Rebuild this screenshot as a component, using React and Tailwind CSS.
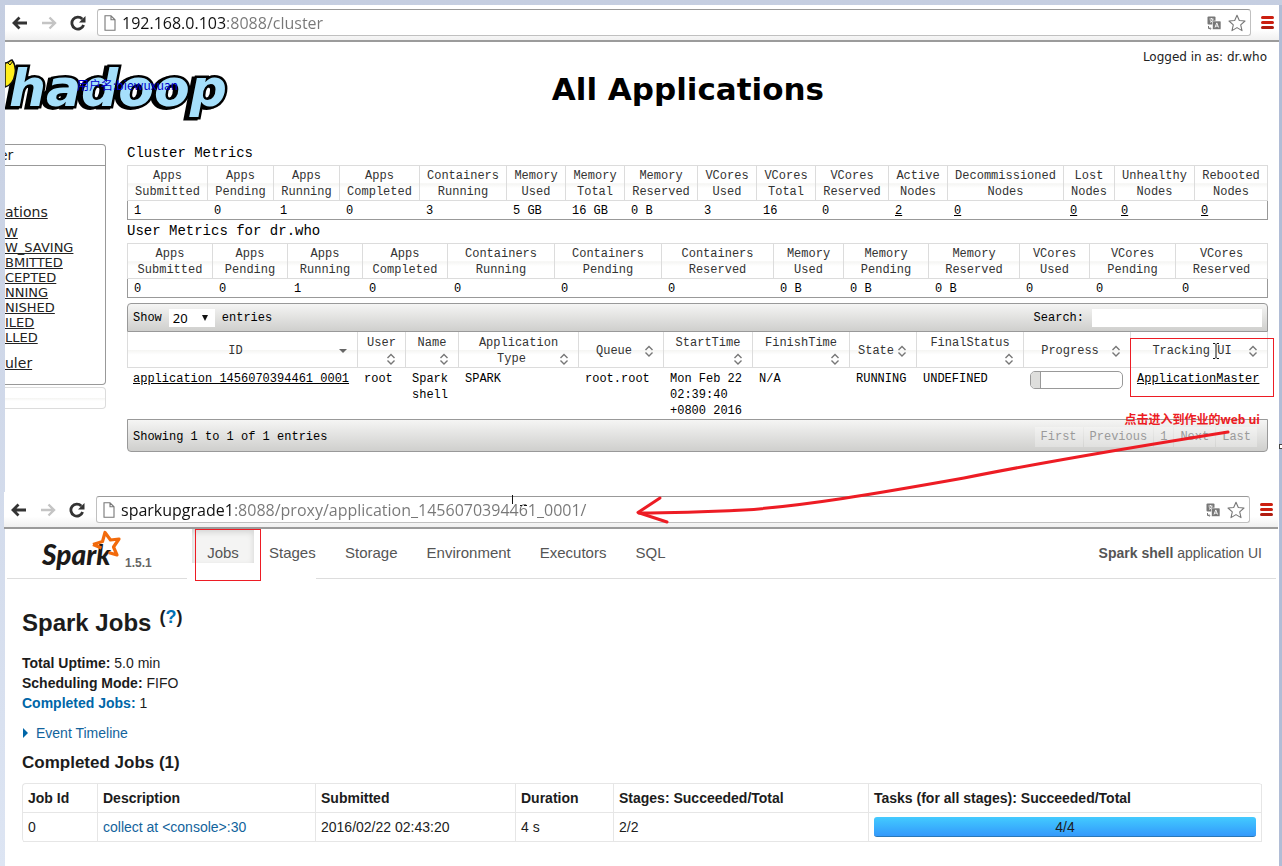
import React from "react";

function BackIcon({ className }) {
  return (
    <svg viewBox="0 0 16 14" className={className} fill="none" stroke="currentColor" aria-hidden="true">
      <path d="M15 7H2.5M7.5 1.5L2 7l5.500 5.500" strokeWidth="2.800" />
    </svg>
  );
}

function ForwardIcon({ className }) {
  return (
    <svg viewBox="0 0 16 14" className={className} fill="none" stroke="currentColor" aria-hidden="true">
      <path d="M1 7h12.500M8.500 1.500L14 7l-5.500 5.500" strokeWidth="2.400" />
    </svg>
  );
}

function ReloadIcon({ className }) {
  return (
    <svg viewBox="0 0 16 16" className={className} aria-hidden="true">
      <path d="M12.300 4A6 6 0 1 0 13.600 10" fill="none" stroke="currentColor" strokeWidth="2.800" />
      <path d="M15.500 1v6.500H9z" fill="currentColor" />
    </svg>
  );
}

function PageIcon() {
  return (
    <svg viewBox="0 0 12 16" className="h-4 w-3 shrink-0" fill="none" stroke="#777" aria-hidden="true">
      <path d="M1 .8h6l4 4v10.500H1zM7 .8v4h4" strokeWidth="1.100" />
    </svg>
  );
}

function TranslateIcon() {
  return (
    <svg viewBox="0 0 14 14" className="h-3.5 w-3.5" aria-hidden="true">
      <rect x="0.500" y="0.500" width="8" height="8" rx="1" fill="#777" />
      <path d="M2.500 3h4M4.500 2v1M3 6.300c1.500-.6 2.500-1.600 2.900-3.200M3.200 4.300c.6 1 1.500 1.700 2.600 2" stroke="#fff" strokeWidth=".9" fill="none" />
      <rect x="5.500" y="5" width="8.500" height="8.500" rx="1" fill="#777" stroke="#fff" strokeWidth=".6" />
      <path d="M8 11.500l1.800-4.600 1.800 4.600M8.600 10.100h2.400" stroke="#fff" strokeWidth=".9" fill="none" />
      <path d="M1.500 10v2.500h2M2.800 11.300l1.200 1.200-1.200 1.200" stroke="#777" fill="none" />
    </svg>
  );
}

function StarIcon() {
  return (
    <svg viewBox="0 0 18 18" className="h-[18px] w-[18px]" aria-hidden="true">
      <path
        d="M9 1.200l2.300 5.300 5.700.5-4.300 3.800 1.300 5.800L9 13.600l-5 3 1.300-5.800L1 7l5.700-.5z"
        fill="#fff"
        stroke="#777"
        strokeWidth="1.100"
        strokeLinejoin="round"
      />
    </svg>
  );
}

function BrowserBar({ url, tone }) {
  return (
    <div className="flex items-center border-b-2 border-[#9b9b9b] bg-linear-to-b from-white from-70% to-[#f0f0f0] py-1 pr-[5px]">
      <div className="flex w-[92px] items-center gap-[13px] pl-[7px]">
        <button type="button" aria-label="Back" className="text-[#333]">
          <BackIcon className="h-3.5 w-4" />
        </button>
        <button type="button" aria-label="Forward" className="text-[#c4c4c4]">
          <ForwardIcon className="h-3.5 w-4" />
        </button>
        <button type="button" aria-label="Reload" className="text-[#333]">
          <ReloadIcon className="h-4 w-4" />
        </button>
      </div>
      <div className="flex h-[27px] flex-1 items-center rounded-[3px] border border-[#c0c0c0] border-t-[#999] bg-white px-1.5">
        <PageIcon />
        <input
          type="text"
          aria-label="Address"
          defaultValue={url}
          className={
            "ml-1.5 h-6 min-w-0 flex-1 bg-clip-text font-['Open_Sans','Noto_Sans',sans-serif] text-base text-transparent caret-black outline-none " +
            tone
          }
        />
        <button type="button" aria-label="Translate this page">
          <TranslateIcon />
        </button>
        <button type="button" aria-label="Bookmark this page" className="-mr-0.5 ml-[7px]">
          <StarIcon />
        </button>
      </div>
      <button type="button" aria-label="Menu" className="ml-2.5 flex w-[13px] flex-col gap-0.5">
        <span className="h-[3px] rounded-full bg-[#cc1f10]" />
        <span className="h-[3px] rounded-full bg-[#cc1f10]" />
        <span className="h-[3px] rounded-full bg-[#b01c10]" />
      </button>
    </div>
  );
}

function HadoopLogo() {
  return (
    <svg viewBox="0 0 228 100" className="h-[100px] w-[228px] shrink-0" role="img" aria-label="hadoop">
      <text
        x="4"
        y="64"
        fontFamily="'DejaVu Sans', sans-serif"
        fontWeight="bold"
        fontStyle="italic"
        fontSize="52"
        fill="#a5dffb"
        stroke="#000"
        strokeWidth="5"
        strokeLinejoin="miter"
        paintOrder="stroke"
        className="drop-shadow-[-3px_1px_0_#000]"
      >
        hadoop
      </text>
      <path d="M0 21c3 0 4-2 7-3 3 4 4 9 3 14-1 6-3 11-10 13z" fill="#ffee1c" stroke="#111" strokeWidth="1.500" />
      <path d="M3 21l2 2 3-4" fill="none" stroke="#111" />
    </svg>
  );
}

const CLUSTER = [
  ["Apps Submitted", "1", "w-[81px]"],
  ["Apps Pending", "0", "w-[66px]"],
  ["Apps Running", "1", "w-[66px]"],
  ["Apps Completed", "0", "w-[80px]"],
  ["Containers Running", "3", "w-[87px]"],
  ["Memory Used", "5 GB", "w-[59px]"],
  ["Memory Total", "16 GB", "w-[59px]"],
  ["Memory Reserved", "0 B", "w-[73px]"],
  ["VCores Used", "3", "w-[59px]"],
  ["VCores Total", "16", "w-[59px]"],
  ["VCores Reserved", "0", "w-[73px]"],
  ["Active Nodes", "2", "w-[59px]", true],
  ["Decommissioned Nodes", "0", "w-[116px]", true],
  ["Lost Nodes", "0", "w-[51px]", true],
  ["Unhealthy Nodes", "0", "w-[80px]", true],
  ["Rebooted Nodes", "0", "w-[73px]", true],
];

const USER = [
  ["Apps Submitted", "0", "w-[86px]"],
  ["Apps Pending", "0", "w-[75px]"],
  ["Apps Running", "1", "w-[75px]"],
  ["Apps Completed", "0", "w-[85px]"],
  ["Containers Running", "0", "w-[107px]"],
  ["Containers Pending", "0", "w-[107px]"],
  ["Containers Reserved", "0", "w-[112px]"],
  ["Memory Used", "0 B", "w-[70px]"],
  ["Memory Pending", "0 B", "w-[85px]"],
  ["Memory Reserved", "0 B", "w-[91px]"],
  ["VCores Used", "0", "w-[70px]"],
  ["VCores Pending", "0", "w-[86px]"],
  ["VCores Reserved", "0", "w-[92px]"],
];

function MetricsTable({ title, data }) {
  return (
    <section>
      <h2 className="h-[23px] text-[14px] leading-[22px] text-black">{title}</h2>
      <table className="w-full table-fixed border-separate border-spacing-0 text-[12px] leading-4">
        <thead>
          <tr>
            {data.map(([head, , width]) => (
              <th
                key={head}
                className={
                  "h-9 border-y border-r border-[#dcdcdc] bg-linear-to-b from-white from-50% via-[#f5f5f3] via-52% to-white to-65% pt-0.5 text-center font-normal text-[#333] first:border-l " +
                  width
                }
              >
                {head.split(" ").map((word) => (
                  <span key={word} className="block">
                    {word}
                  </span>
                ))}
              </th>
            ))}
          </tr>
        </thead>
        <tbody>
          <tr>
            {data.map(([head, value, , link]) => (
              <td
                key={head}
                className="h-[19px] border-b border-[#999] pt-0.5 pl-1.5 text-black first:border-l last:border-r"
              >
                {link ? (
                  <a href="#nodes" className="underline">
                    {value}
                  </a>
                ) : (
                  value
                )}
              </td>
            ))}
          </tr>
        </tbody>
      </table>
    </section>
  );
}

const APP_COLUMNS = [
  ["ID", "w-[231px]"],
  ["User", "w-[48px]"],
  ["Name", "w-[53px]"],
  ["Application Type", "w-[120px]"],
  ["Queue", "w-[85px]"],
  ["StartTime", "w-[89px]"],
  ["FinishTime", "w-[97px]"],
  ["State", "w-[67px]"],
  ["FinalStatus", "w-[107px]"],
  ["Progress", "w-[107px]"],
  ["Tracking UI", "w-[137px]"],
];

function SortIcon({ sorted }) {
  return (
    <svg viewBox="0 0 14 16" className="float-right h-4 w-3.5" aria-hidden="true">
      {sorted ? (
        <path d="M3 6h8l-4 4z" fill="#666" />
      ) : (
        <path d="M3.500 7L7 3.500 10.500 7M3.500 9.500L7 13l3.500-3.500" fill="none" stroke="#777" strokeWidth="1.400" />
      )}
    </svg>
  );
}

function ApplicationsTable() {
  return (
    <div className="relative z-10 mt-[5px] text-[12px] leading-4 text-black">
      <div className="flex h-[29px] items-center justify-between rounded-t border border-[#999] bg-linear-to-b from-[#f5f5f4] to-[#cfcfcd] pr-[5px] pl-[5px]">
        <label className="flex items-center gap-[7px]">
          Show
          <span className="relative flex">
            <select
              defaultValue="20"
              className="h-[18px] w-[46px] appearance-none bg-white pl-1 font-['Noto_Sans',sans-serif] text-[13px] leading-[18px]"
            >
              <option>20</option>
              <option>40</option>
              <option>60</option>
            </select>
            <svg viewBox="0 0 8 6" className="pointer-events-none absolute top-1.5 right-1.5 h-1.5 w-2" aria-hidden="true">
              <path d="M1 0h6L4 6z" fill="#111" />
            </svg>
          </span>
          entries
        </label>
        <label className="flex items-center gap-2">
          Search:
          <input type="text" className="h-[18px] w-[170px] bg-white outline-none" />
        </label>
      </div>
      <table className="w-full table-fixed border-separate border-spacing-0">
        <thead>
          <tr>
            {APP_COLUMNS.map(([name, width], i) => (
              <th
                key={name}
                className={
                  "h-9 border-r border-b border-[#dcdcdc] bg-linear-to-b from-white from-50% via-[#f5f5f3] via-52% to-white to-65% px-[7px] pt-[3px] text-center align-middle font-normal text-[#333] first:border-l " +
                  width
                }
              >
                <div className="flow-root">
                  {name}
                  <SortIcon sorted={i === 0} />
                </div>
              </th>
            ))}
          </tr>
        </thead>
        <tbody>
          <tr className="align-top [&>td]:h-[50px] [&>td]:pt-[3px] [&>td]:pl-1.5">
            <td>
              <a href="#application" className="underline">
                application_1456070394461_0001
              </a>
            </td>
            <td>root</td>
            <td>Spark shell</td>
            <td>SPARK</td>
            <td>root.root</td>
            <td>Mon Feb 22 02:39:40 +0800 2016</td>
            <td>N/A</td>
            <td>RUNNING</td>
            <td>UNDEFINED</td>
            <td>
              <div className="h-[18px] w-[93px] overflow-hidden rounded-[5px] border border-[#999] bg-white">
                <div className="h-full w-2.5 border-r border-[#999] bg-[#dededc]" />
              </div>
            </td>
            <td>
              <a href="#master" className="underline">
                ApplicationMaster
              </a>
            </td>
          </tr>
        </tbody>
      </table>
      <div className="flex h-[33px] items-center justify-between rounded-b border border-[#999] bg-linear-to-b from-[#f5f5f4] to-[#cfcfcd] pt-0.5 pr-2.5 pl-[5px]">
        <span>Showing 1 to 1 of 1 entries</span>
        <div className="flex gap-px text-[#9a9a9a]">
          {["First", "Previous", "1", "Next", "Last"].map((label) => (
            <button key={label} type="button" className="h-5 bg-white/30 px-1.5">
              {label}
            </button>
          ))}
        </div>
      </div>
      <div className="pointer-events-none absolute top-[35px] -right-1.5 h-[59px] w-36 border border-[#ed1c24]" />
      <p className="absolute top-[107px] right-2 font-['Open_Sans','Noto_Sans_CJK_SC',sans-serif] text-[12px] leading-5 font-bold whitespace-nowrap text-[#ed1c24]">
        点击进入到作业的web ui
      </p>
      <svg viewBox="0 0 8 16" className="pointer-events-none absolute top-10 right-12 h-4 w-2" fill="none" stroke="#111" aria-hidden="true">
        <path d="M1 .5h2l1 1 1-1h2M4 1.500v13M1 15.500h2l1-1 1 1h2" />
      </svg>
      <svg
        viewBox="0 0 600 100"
        className="pointer-events-none absolute top-[125px] right-[34px] h-[100px] w-[600px]"
        fill="none"
        stroke="#ed1c24"
        strokeLinecap="round"
        aria-hidden="true"
      >
        <path d="M594 4C500 19 400 36 330 50 240 66 170 78 110 82 70 84 40 85 5 85" strokeWidth="3" />
        <path d="M26 70L4 84.500 33 94" strokeWidth="3" strokeLinejoin="round" />
      </svg>
    </div>
  );
}

const STATES = ["W", "W_SAVING", "BMITTED", "CEPTED", "NNING", "NISHED", "ILED", "LLED"];

function Sidebar() {
  return (
    <aside className="mt-0.5 w-[101px] shrink-0 font-['DejaVu_Sans',sans-serif] text-[#222]">
      <nav className="h-[241px] rounded-r-[4px] border border-l-0 border-[#999]">
        <h3 className="h-[21px] border-b border-[#999] text-[14px] leading-5">
          <span className="-ml-1.5">er</span>
        </h3>
        <a href="#applications" className="mt-9 block text-[14px] leading-5 underline">
          ations
        </a>
        <ul className="mt-[3px] text-[13px] leading-[15px]">
          {STATES.map((state) => (
            <li key={state}>
              <a href="#state" className="underline">
                {state}
              </a>
            </li>
          ))}
        </ul>
        <a href="#scheduler" className="mt-2 block text-[14px] leading-5 underline">
          uler
        </a>
      </nav>
      <div className="mt-0.5 h-[22px] rounded-r-[4px] border border-l-0 border-[#dcdcdc] bg-linear-to-b from-white from-50% via-[#f5f5f3] via-52% to-white to-65%" />
    </aside>
  );
}

function HadoopPage() {
  return (
    <div className="overflow-x-clip pb-10 font-['Liberation_Mono',monospace]">
      <header className="relative flex h-[100px] items-start font-['DejaVu_Sans',sans-serif]">
        <HadoopLogo />
        <span className="absolute top-[33px] left-[72px] font-['Noto_Sans_CJK_SC',sans-serif] text-[12px] leading-5 text-[#0000cd]">
          用户名:biewuxuan
        </span>
        <h1 className="mt-[27px] flex-1 text-center text-[31px] leading-10 font-bold text-black">All Applications</h1>
        <p className="mt-[5px] mr-3 text-[12px] leading-5 text-[#222]">Logged in as: dr.who</p>
      </header>
      <div className="flex">
        <Sidebar />
        <main className="mr-[11px] ml-[21px] min-w-0 flex-1">
          <MetricsTable title="Cluster Metrics" data={CLUSTER} />
          <MetricsTable title="User Metrics for dr.who" data={USER} />
          <ApplicationsTable />
        </main>
      </div>
    </div>
  );
}

function SparkLogo() {
  return (
    <svg viewBox="0 0 80 46" className="h-[46px] w-20" role="img" aria-label="Spark">
      <text
        x="1"
        y="36"
        fontFamily="Lato, sans-serif"
        fontWeight="900"
        fontStyle="italic"
        fontSize="28"
        fill="#1c1a19"
      >
        Spark
      </text>
      <path
        d="M52 15.500l9.500-3 2.500-9 5.500 7.500 8.500-1-5.500 8 3.500 8-8.500-2.500M52 15.500l8.500 3.500"
        fill="none"
        stroke="#f26a0c"
        strokeWidth="3.200"
        strokeLinejoin="round"
      />
    </svg>
  );
}

function SparkNav() {
  return (
    <nav className="relative flex h-[50px] text-[15px] leading-[48px] text-[#555]">
      <div className="flex w-[180px] border-b border-[#ddd] pl-[34px]">
        <SparkLogo />
        <span className="mt-6 ml-1 text-[12px] leading-5 font-bold text-[#666]">1.5.1</span>
      </div>
      <div className="flex w-[129px] pl-[5px]">
        <a
          href="#jobs"
          className="h-[34px] w-[62px] bg-[#f4f4f3] text-center shadow-[inset_0_3px_6px_rgba(0,0,0,0.14)]"
        >
          Jobs
        </a>
        <a href="#stages" className="pl-[15px]">
          Stages
        </a>
      </div>
      <div className="flex flex-1 gap-[29px] border-b border-[#ddd] pr-3.5 pl-[29px]">
        <a href="#storage">Storage</a>
        <a href="#environment">Environment</a>
        <a href="#executors">Executors</a>
        <a href="#sql">SQL</a>
        <p className="ml-auto text-[14px]">
          <strong>Spark shell</strong> application UI
        </p>
      </div>
      <div className="pointer-events-none absolute top-0 left-[188px] h-[52px] w-[66px] border border-[#ed1c24]" />
    </nav>
  );
}

const JOB_COLUMNS = [
  ["Job Id", "w-[75px]"],
  ["Description", "w-[218px]"],
  ["Submitted", "w-[200px]"],
  ["Duration", "w-[98px]"],
  ["Stages: Succeeded/Total", "w-[255px]"],
  ["Tasks (for all stages): Succeeded/Total", "w-[393px]"],
];

function SparkPage() {
  return (
    <div className="font-['Liberation_Sans',Arial,sans-serif] text-[14px] leading-5 text-[#1c1c1c]">
      <SparkNav />
      <main className="px-[15px] pb-[22px]">
        <h1 className="flex pt-6 text-[24px] leading-10 font-bold">
          Spark Jobs
          <span className="ml-2 text-[18px] leading-7">
            (
            <a href="#help" className="text-[#0071b3]">
              ?
            </a>
            )
          </span>
        </h1>
        <ul className="mt-2.5">
          <li>
            <strong>Total Uptime:</strong> 5.0 min
          </li>
          <li>
            <strong>Scheduling Mode:</strong> FIFO
          </li>
          <li>
            <a href="#completed" className="font-bold text-[#0066a8]">
              Completed Jobs:
            </a>{" "}
            1
          </li>
        </ul>
        <button type="button" className="mt-2.5 flex items-center gap-2 text-[#12639c]">
          <svg viewBox="0 0 6 10" className="h-2.5 w-1.5" aria-hidden="true">
            <path d="M1 0l5 5-5 5z" fill="#0066a8" />
          </svg>
          Event Timeline
        </button>
        <h2 id="completed" className="mt-2.5 text-[17px] leading-5 font-bold">
          Completed Jobs (1)
        </h2>
        <table className="mt-2.5 w-full table-fixed border-separate border-spacing-0 rounded border-t border-l border-[#e6e6e6] text-left">
          <thead>
            <tr>
              {JOB_COLUMNS.map(([name, width]) => (
                <th key={name} className={"h-[29px] border-r border-b border-[#e6e6e6] px-[5px] font-bold " + width}>
                  {name}
                </th>
              ))}
            </tr>
          </thead>
          <tbody>
            <tr className="[&>td]:h-[29px] [&>td]:border-r [&>td]:border-b [&>td]:border-[#e6e6e6] [&>td]:px-[5px]">
              <td>0</td>
              <td>
                <a href="#job" className="text-[#12639c]">
                  collect at &lt;console&gt;:30
                </a>
              </td>
              <td>2016/02/22 02:43:20</td>
              <td>4 s</td>
              <td>2/2</td>
              <td>
                <div className="h-5 rounded-[3px] border-b border-[#2a78b8] bg-linear-to-b from-[#44cbff] to-[#3499fb] text-center">
                  4/4
                </div>
              </td>
            </tr>
          </tbody>
        </table>
      </main>
    </div>
  );
}

export default function App() {
  return (
    <div className="relative min-h-screen bg-linear-to-b from-[#c5cee1] to-[#dde5f3] pt-[5px] pl-[5px]">
      <div className="min-h-[calc(100vh-5px)] border-r-3 border-[#b1bdd6] bg-white">
        <BrowserBar
          url="192.168.0.103:8088/cluster"
          tone="bg-[linear-gradient(90deg,#111_104px,#777_104px)]"
        />
        <HadoopPage />
        <div className="relative mr-px -ml-px">
          <BrowserBar
            url="sparkupgrade1:8088/proxy/application_1456070394461_0001/"
            tone="bg-[linear-gradient(90deg,#111_114px,#777_114px)]"
          />
          <svg viewBox="0 0 16 22" className="pointer-events-none absolute top-[3px] left-[508px] h-[22px] w-4" fill="none" stroke="#111" aria-hidden="true">
            <path d="M.5 0v9M8 10.500h2M12 10.500h3" />
          </svg>
        </div>
        <div className="mr-[3px] ml-0.5">
          <SparkPage />
        </div>
      </div>
      <span className="absolute top-[444px] right-0 h-[5px] w-[3px] border border-r-0 border-[#444] bg-white" />
    </div>
  );
}
